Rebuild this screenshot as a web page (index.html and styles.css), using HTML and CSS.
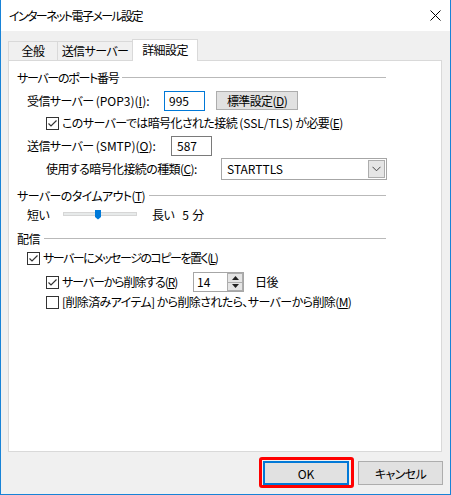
FILE: index.html
```html
<!DOCTYPE html>
<html lang="ja">
<head>
<meta charset="utf-8">
<title>インターネット電子メール設定</title>
<link rel="stylesheet" href="styles.css">
</head>
<body>
<div class="window">
  <div class="titlebar">
    <span class="title">インターネット電子メール設定</span>
    <svg class="close" width="11" height="11" viewBox="0 0 11 11"><path d="M0.5 0.5 L10.5 10.5 M10.5 0.5 L0.5 10.5" stroke="#000" stroke-width="1" fill="none"/></svg>
  </div>
  <div class="body">
    <div class="tabs">
      <div class="tab t1">全般</div>
      <div class="tab t2">送信サーバー</div>
      <div class="tab t3 active">詳細設定</div>
    </div>
    <div class="panel">
      <div class="group-head g1"><span>サーバーのポート番号</span><i class="rule"></i></div>

      <div class="row r-pop">
        <span class="lbl lbl-pop">受信サーバー <span class="lat">(POP3)(<u>I</u>):</span></span>
        <span class="input focus in-pop">995</span>
        <span class="btn btn-std">標準設定(<u>D</u>)</span>
      </div>

      <div class="row r-ssl">
        <span class="check on"><svg width="11" height="11" viewBox="0 0 11 11"><path d="M1.5 5.5 L4 8 L9.5 2.5" stroke="#333" stroke-width="1.2" fill="none"/></svg></span>
        <span class="cb-text">このサーバーでは暗号化された接続 <span class="lat">(SSL/TLS)</span> が必要(<u>E</u>)</span>
      </div>

      <div class="row r-smtp">
        <span class="lbl lbl-smtp">送信サーバー <span class="lat">(SMTP)(<u>O</u>):</span></span>
        <span class="input in-smtp">587</span>
      </div>

      <div class="row r-enc">
        <span class="lbl lbl-enc">使用する暗号化接続の種類(<u>C</u>):</span>
        <span class="select">
          <span class="select-val lat">STARTTLS</span>
          <span class="select-btn"><svg width="9" height="6" viewBox="0 0 9 6"><path d="M0.5 0.8 L4.5 4.8 L8.5 0.8" stroke="#444" stroke-width="1" fill="none"/></svg></span>
        </span>
      </div>

      <div class="group-head g2"><span>サーバーのタイムアウト(<u>T</u>)</span><i class="rule"></i></div>

      <div class="row r-slider">
        <span class="lbl lbl-short">短い</span>
        <svg class="slider" width="74" height="10" viewBox="0 0 74 10">
          <rect x="0.5" y="2.5" width="73" height="3" fill="#e7eaea" stroke="#d6d6d6"/>
          <path d="M32 0 H38 V7 L35 9.5 L32 7 Z" fill="#007ad9"/>
        </svg>
        <span class="long">長い</span>
        <span class="num">5</span>
        <span class="unit">分</span>
      </div>

      <div class="group-head g3"><span>配信</span><i class="rule"></i></div>

      <div class="row r-cb1">
        <span class="check on"><svg width="11" height="11" viewBox="0 0 11 11"><path d="M1.5 5.5 L4 8 L9.5 2.5" stroke="#333" stroke-width="1.2" fill="none"/></svg></span>
        <span class="cb-text narrow">サーバーにメッセージのコピーを置く(<u>L</u>)</span>
      </div>

      <div class="row r-cb2">
        <span class="cb-wrap">
          <span class="check on"><svg width="11" height="11" viewBox="0 0 11 11"><path d="M1.5 5.5 L4 8 L9.5 2.5" stroke="#333" stroke-width="1.2" fill="none"/></svg></span>
          <span class="cb-text tight">サーバーから削除する(<u>R</u>)</span>
        </span>
        <span class="spinner">
          <span class="spin-val">14</span>
          <span class="spin-btns">
            <span class="spin-b up"><svg width="7" height="4" viewBox="0 0 7 4"><path d="M3.5 0 L7 4 H0 Z" fill="#222"/></svg></span>
            <span class="spin-b down"><svg width="7" height="4" viewBox="0 0 7 4"><path d="M0 0 H7 L3.5 4 Z" fill="#222"/></svg></span>
          </span>
        </span>
        <span class="days">日後</span>
      </div>

      <div class="row r-cb3">
        <span class="check"></span>
        <span class="cb-text">[削除済みアイテム] から削除されたら、サーバーから削除(<u>M</u>)</span>
      </div>
    </div>
    <div class="footer">
      <span class="btn btn-ok lat">OK</span>
      <span class="btn btn-cancel">キャンセル</span>
    </div>
  </div>
</div>
</body>
</html>
```
FILE: styles.css
```css
html, body {
  margin: 0;
  padding: 0;
  background: #ffffff;
}
body {
  font-family: "Noto Sans CJK JP", "Noto Sans", sans-serif;
  font-size: 12px;
  font-feature-settings: "palt" 1;
  letter-spacing: -0.6px;
  color: #000;
}
.lat { letter-spacing: 0; }
u { text-decoration: underline; text-underline-offset: 1px; }

.window {
  width: 451px;
  height: 495px;
  box-sizing: border-box;
  border: 1px solid #1883d7;
  border-top: none;
  background: #f0f0f0;
  display: flex;
  flex-direction: column;
}
.titlebar {
  height: 31px;
  background: #fff;
  display: flex;
  align-items: center;
  justify-content: space-between;
  padding: 0 9px 0 8px;
  flex: none;
}
.title { line-height: 16px; letter-spacing: -1.6px; }
.close { display: block; margin-top: -1px; }

.body {
  padding: 8px 7px 0 7px;
  display: flex;
  flex-direction: column;
}
.tabs {
  display: flex;
  align-items: flex-end;
  height: 21px;
}
.tab {
  box-sizing: border-box;
  height: 19px;
  border: 1px solid #d9d9d9;
  border-bottom: none;
  background: #f0f0f0;
  display: flex;
  align-items: center;
  justify-content: center;
  line-height: 16px;
}
.t1 { width: 50px; }
.t2 { width: 76px; margin-left: -1px; }
.t3 { width: 66px; margin-left: -1px; }
.tab.active {
  height: 22px;
  background: #fff;
  margin-bottom: -1px;
  position: relative;
  z-index: 1;
  padding-bottom: 2px;
}
.panel {
  box-sizing: border-box;
  width: 434px;
  height: 392px;
  border: 1px solid #d9d9d9;
  background: #fff;
  padding: 7px 0 0 8px;
}
.group-head {
  display: flex;
  align-items: center;
  height: 20px;
  width: 369px;
}
.group-head span { line-height: 16px; }
.g1 span { letter-spacing: -1.3px; }
.rule {
  flex: 1;
  height: 1px;
  background: #b9b9b9;
  margin-left: 4px;
  margin-top: -1px;
}
.g2 { margin-top: 6px; }
.g3 { margin-top: 5px; }

.row {
  display: flex;
  align-items: center;
  line-height: 16px;
  white-space: nowrap;
}
.lbl { flex: none; }

.r-pop { margin-top: 2px; height: 21px; padding-left: 10px; }
.lbl-pop { width: 137px; }
.input {
  box-sizing: border-box;
  height: 20px;
  border: 1px solid #7a7a7a;
  background: #fff;
  display: flex;
  align-items: center;
  padding-left: 4px;
  letter-spacing: 0;
}
.input.focus { border-color: #0078d7; }
.in-pop { width: 41px; }
.btn {
  box-sizing: border-box;
  background: #e1e1e1;
  border: 1px solid #adadad;
  display: flex;
  align-items: center;
  justify-content: center;
}
.btn-std { width: 82px; height: 19px; margin-left: 11px; }

.r-ssl { margin-top: 2px; height: 20px; padding-left: 29px; }
.check {
  box-sizing: border-box;
  width: 13px;
  height: 13px;
  border: 1px solid #333;
  background: #fff;
  flex: none;
  display: flex;
  align-items: center;
  justify-content: center;
}
.check svg { display: block; }
.cb-text { margin-left: 3px; }
.cb-text.narrow { letter-spacing: -1.5px; }
.cb-text.tight { letter-spacing: -1.1px; }

.r-smtp { margin-top: 2px; height: 21px; padding-left: 10px; }
.lbl-smtp { width: 144px; }
.in-smtp { width: 41px; padding-left: 5px; }

.r-enc { margin-top: 2px; height: 22px; padding-left: 29px; }
.lbl-enc { width: 175px; }
.select {
  box-sizing: border-box;
  width: 166px;
  height: 22px;
  border: 1px solid #a6a6a6;
  background: #fff;
  display: flex;
  align-items: center;
  justify-content: space-between;
  padding: 1px 1px 1px 5px;
}
.select-btn {
  box-sizing: border-box;
  width: 17px;
  height: 18px;
  background: #e5e5e5;
  border: 1px solid #adadad;
  display: flex;
  align-items: center;
  justify-content: center;
}
.select-btn svg { display: block; }

.r-slider { height: 18px; padding-left: 10px; }
.lbl-short { width: 36px; }
.slider { display: block; flex: none; }
.long { margin-left: 15px; }
.num { margin-left: 8px; }
.unit { margin-left: 4px; }

.r-cb1 { height: 18px; padding-left: 10px; }
.r-cb2 { margin-top: 5px; height: 20px; padding-left: 29px; }
.cb-wrap { width: 147px; display: flex; align-items: center; flex: none; }
.spinner {
  box-sizing: border-box;
  width: 51px;
  height: 20px;
  border: 1px solid #a6a6a6;
  background: #fff;
  display: flex;
  align-items: center;
  justify-content: space-between;
  padding: 0 0 0 3px;
  letter-spacing: 0;
}
.spin-btns {
  width: 16px;
  height: 18px;
  display: flex;
  flex-direction: column;
}
.spin-b {
  box-sizing: border-box;
  flex: 1;
  background: #e5e5e5;
  border: 1px solid #adadad;
  display: flex;
  align-items: center;
  justify-content: center;
}
.spin-b.down { border-top: none; }
.spin-b svg { display: block; }
.days { margin-left: 11px; }

.r-cb3 { margin-top: 1px; height: 18px; padding-left: 29px; }

.footer {
  display: flex;
  justify-content: flex-end;
  margin-top: 9px;
  height: 24px;
}
.btn-ok {
  width: 86px;
  height: 24px;
  border: 2px solid #0078d7;
  position: relative;
}
.btn-ok::after {
  content: "";
  position: absolute;
  left: -6px;
  right: -7px;
  top: -6px;
  bottom: -5px;
  border: 3px solid #ff0000;
  border-radius: 3px;
}
.btn-cancel {
  width: 85px;
  height: 24px;
  margin-left: 9px;
}
```
